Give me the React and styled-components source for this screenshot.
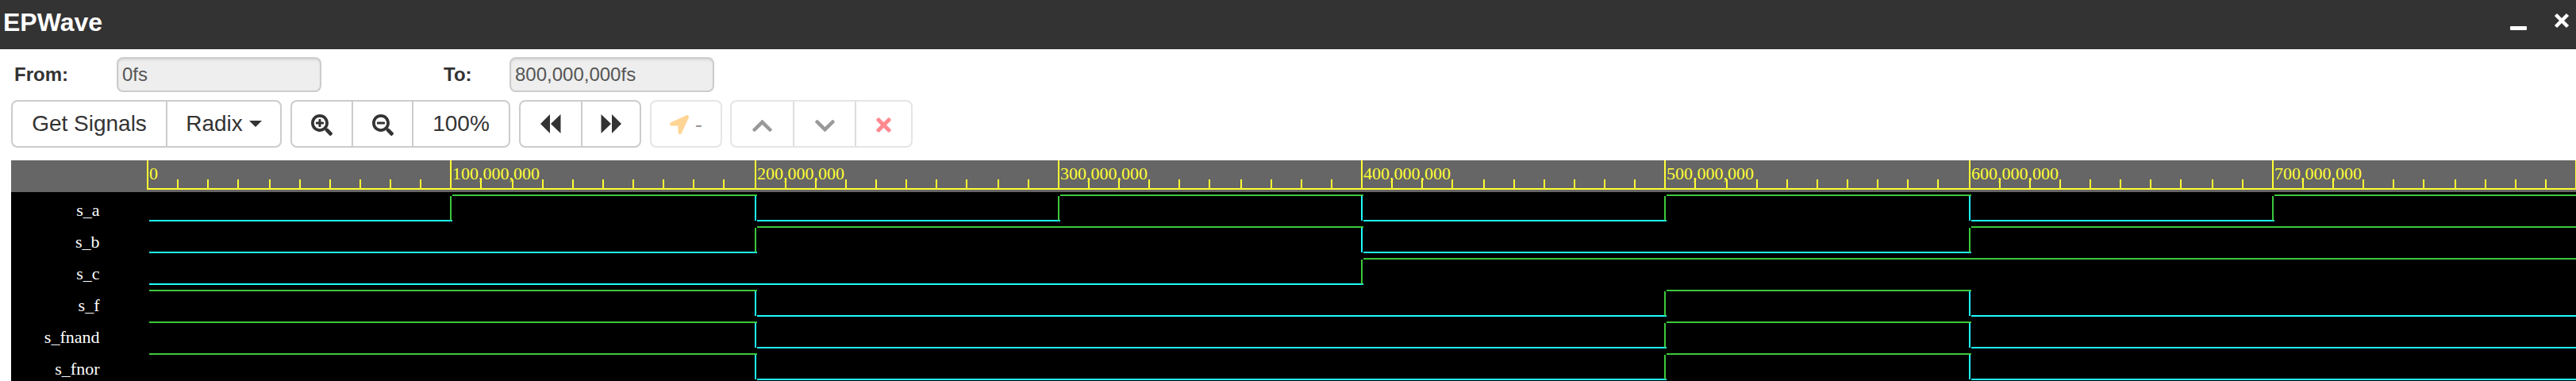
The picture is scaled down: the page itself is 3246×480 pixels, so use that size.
import React from "react";
import styled, { createGlobalStyle } from "styled-components";
import { FaSearchPlus, FaSearchMinus, FaLocationArrow, FaChevronUp, FaChevronDown, FaTimes } from "react-icons/fa";

const Global = createGlobalStyle`
  html, body { margin: 0; padding: 0; background: #fff; overflow: hidden; }
  * { box-sizing: border-box; }
`;

const Page = styled.div`
  width: 3246px;
  height: 480px;
  overflow: hidden;
  font-family: "Liberation Sans", Arial, sans-serif;
  color: #333;
  background: #fff;
`;

const TitleBar = styled.header`
  height: 62px;
  background: #333;
  color: #fff;
  display: flex;
  align-items: center;
  justify-content: space-between;
  padding: 0 8px 6px 4px;
`;

const Title = styled.h1`
  margin: 0;
  font-size: 32px;
  line-height: 36px;
  font-weight: 700;
`;

const WindowControls = styled.div`
  display: flex;
  align-items: flex-start;
  gap: 34px;
`;

const RangeRow = styled.div`
  height: 44px;
  margin-top: 10px;
  display: flex;
  align-items: center;
  padding-left: 18px;
`;

const RangeLabel = styled.label`
  width: ${(p) => p.$width}px;
  font-size: 24px;
  font-weight: 700;
`;

const RangeInput = styled.input`
  width: 258px;
  height: 44px;
  padding: 0 5px;
  background: #eee;
  border: 2px solid #ccc;
  border-radius: 8px;
  box-shadow: inset 0 2px 2px rgba(0, 0, 0, 0.075);
  font: 24px "Liberation Sans", Arial, sans-serif;
  color: #555;
  margin-right: ${(p) => p.$gap || 0}px;
  opacity: 1;
`;

const Toolbar = styled.div`
  margin-top: 10px;
  padding-left: 14px;
  display: flex;
  gap: 11px;
`;

const BtnGroup = styled.div`
  display: flex;
  height: 60px;
  border: 2px solid ${(p) => (p.$disabled ? "#e5e5e5" : "#ccc")};
  border-radius: 8px;
  background: #fff;
  margin-left: ${(p) => p.$nudge || 0}px;
`;

const Btn = styled.button`
  width: ${(p) => p.$width}px;
  height: 100%;
  padding: ${(p) => p.$drop || 0}px 0 0;
  border: 0;
  border-left: ${(p) => (p.$first ? "0" : `2px solid ${p.$disabled ? "#ddd" : "#ccc"}`)};
  background: transparent;
  font: 28px "Liberation Sans", Arial, sans-serif;
  color: #333;
  display: flex;
  align-items: center;
  justify-content: center;
  gap: 8px;
`;

const Caret = styled.span`
  width: 0;
  height: 0;
  border-top: 8px solid #333;
  border-left: 8px solid transparent;
  border-right: 8px solid transparent;
`;

const Dash = styled.span`
  font-size: 28px;
  color: #999;
`;

const WavePanel = styled.div`
  margin: 16px 0 0 14px;
  height: 278px;
  overflow: hidden;
`;

const WaveSvg = styled.svg`
  display: block;
`;

const CYAN = "#1ffcff";
const GREEN = "#3cc83c";
const YELLOW = "#ffff33";
// The axis is laid out on a 2x pixel grid: every mark snaps to an even pixel.
const tickX = (i) => 2 * Math.round(93 + 19.125 * i);
const xAt = (i) => tickX(i * 10);

const signals = [
  { name: "s_a", v: [0, 1, 0, 1, 0, 1, 0, 1] },
  { name: "s_b", v: [0, 0, 1, 1, 0, 0, 1, 1] },
  { name: "s_c", v: [0, 0, 0, 0, 1, 1, 1, 1] },
  { name: "s_f", v: [1, 1, 0, 0, 0, 1, 0, 0] },
  { name: "s_fnand", v: [1, 1, 0, 0, 0, 1, 0, 0] },
  { name: "s_fnor", v: [1, 1, 0, 0, 0, 1, 0, 0] },
];

const Axis = () => {
  const ticks = [];
  for (let i = 0; i < 80; i++) {
    if (i % 10 === 0) continue;
    ticks.push(<rect key={i} x={tickX(i) - 1} y={226} width={2} height={12} fill={YELLOW} />);
  }
  const majors = [];
  for (let i = 0; i <= 8; i++) {
    const x = xAt(i);
    majors.push(<rect key={`m${i}`} x={x - 1} y={202} width={2} height={36} fill={YELLOW} />);
    if (i < 8) {
      const label = i === 0 ? "0" : `${i}00,000,000`;
      majors.push(
        <text key={`t${i}`} x={x + 2} y={226} fill={YELLOW} fontSize="22" fontFamily="'Liberation Serif', serif">
          {label}
        </text>
      );
    }
  }
  return (
    <g>
      <rect x={185} y={237} width={3061} height={2} fill={YELLOW} />
      {ticks}
      {majors}
    </g>
  );
};

const Trace = ({ sig, row }) => {
  const hi = 246 + row * 40;
  const lo = 278 + row * 40;
  const parts = [];
  let start = 188;
  for (let i = 0; i < 8; i++) {
    const val = sig.v[i];
    const next = sig.v[i + 1];
    const y = val ? hi : lo;
    const end = i === 7 ? 3246 : xAt(i + 1) + 2;
    if (next === val) continue;
    parts.push(<rect key={`h${i}`} x={start} y={y - 1} width={end - start} height={2} fill={val ? GREEN : CYAN} />);
    if (i < 7) {
      parts.push(
        <rect key={`v${i}`} x={end - 3} y={hi + 1} width={2} height={lo - hi - 1} fill={next ? GREEN : CYAN} />
      );
    }
    start = end;
  }
  return (
    <g>
      <text x={125.5} y={272 + row * 40} textAnchor="end" fill="#fff" fontSize="22" fontFamily="'Liberation Serif', serif">
        {sig.name}
      </text>
      {parts}
    </g>
  );
};

const Wave = () => (
  <WaveSvg width={3232} height={278} viewBox="14 202 3232 278" shapeRendering="crispEdges">
    <rect x={14} y={202} width={3232} height={40} fill="#666" />
    <rect x={14} y={242} width={3232} height={238} fill="#000" />
    <Axis />
    {signals.map((s, i) => (
      <Trace key={s.name} sig={s} row={i} />
    ))}
  </WaveSvg>
);

const Rewind = () => (
  <svg width="26" height="24" viewBox="0 0 26 24" fill="#333">
    <polygon points="0,12 12,0 12,24" />
    <polygon points="13,12 25.5,0 25.5,24" />
  </svg>
);

const Forward = () => (
  <svg width="26" height="24" viewBox="0 0 26 24" fill="#333">
    <polygon points="0.5,0 13,12 0.5,24" />
    <polygon points="14,0 26,12 14,24" />
  </svg>
);

export default function App() {
  return (
    <Page>
      <Global />
      <TitleBar>
        <Title>EPWave</Title>
        <WindowControls>
          <svg width="22" height="26" viewBox="0 0 22 26"><rect x="1" y="18" width="21" height="5" rx="1" fill="#fff" /></svg>
          <svg width="20" height="22" viewBox="0 0 20 22"><path d="M2.5 3.5 L17.5 18.5 M17.5 3.5 L2.5 18.5" stroke="#fff" strokeWidth="4.5" /></svg>
        </WindowControls>
      </TitleBar>
      <RangeRow>
        <RangeLabel $width={129}>From:</RangeLabel>
        <RangeInput readOnly value="0fs" $gap={154} />
        <RangeLabel $width={83}>To:</RangeLabel>
        <RangeInput readOnly value="800,000,000fs" />
      </RangeRow>
      <Toolbar>
        <BtnGroup>
          <Btn $first $width={193}>Get Signals</Btn>
          <Btn $width={144}>Radix <Caret /></Btn>
        </BtnGroup>
        <BtnGroup>
          <Btn $first $width={75} $drop={2}><FaSearchPlus size={27} /></Btn>
          <Btn $width={76} $drop={2}><FaSearchMinus size={27} /></Btn>
          <Btn $width={122}>100%</Btn>
        </BtnGroup>
        <BtnGroup>
          <Btn $first $width={76}><Rewind /></Btn>
          <Btn $width={74}><Forward /></Btn>
        </BtnGroup>
        <BtnGroup $disabled>
          <Btn $first $disabled $width={87} $drop={2}><FaLocationArrow size={24} color="#ffd595" /><Dash>-</Dash></Btn>
        </BtnGroup>
        <BtnGroup $disabled $nudge={-1}>
          <Btn $first $disabled $width={77} $drop={4}><FaChevronUp size={29} color="#999" /></Btn>
          <Btn $disabled $width={78} $drop={4}><FaChevronDown size={29} color="#999" /></Btn>
          <Btn $disabled $width={71} $drop={2}><FaTimes size={27} color="#ff8a90" /></Btn>
        </BtnGroup>
      </Toolbar>
      <WavePanel>
        <Wave />
      </WavePanel>
    </Page>
  );
}
